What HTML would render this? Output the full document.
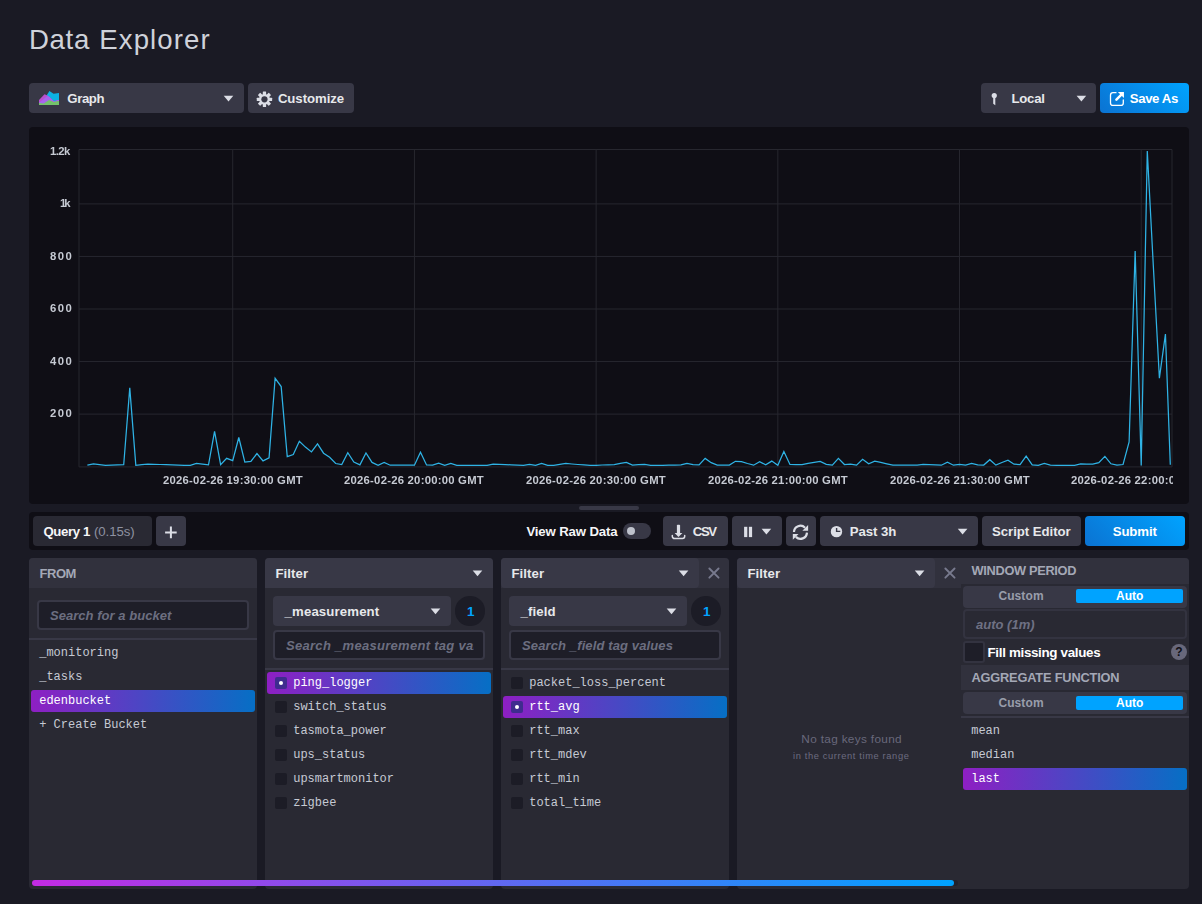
<!DOCTYPE html>
<html lang="en"><head><meta charset="utf-8"><title>Data Explorer</title>
<style>
*{box-sizing:border-box;margin:0;padding:0}
html,body{width:1202px;height:904px;overflow:hidden;background:#1a1a24;font-family:"Liberation Sans", sans-serif;color:#d4d7dd}
.b,.t,svg{position:absolute}
.t{white-space:nowrap;display:block}
.m{font:400 12px/20px "Liberation Mono", monospace}
.g{will-change:transform}
.btn{background:#383846;border-radius:4px;height:30px}
.pri{background:linear-gradient(45deg,#0b73d2,#00a3ff)}
.card{background:#292933;border-radius:4px;top:558px;height:331px}
.hd{background:#31313d;height:30px;top:558px;border-radius:4px 4px 0 0}
.inp{background:#1e1e28;border:2px solid #383846;border-radius:4px;height:30px}
.sep{height:2px;background:#383846}
.sel{height:22px;border-radius:3px;background:linear-gradient(90deg,#8e1fc3,#066fc5)}
.cb{width:12px;height:12px;border-radius:2px;background:#1c1c26}
.on{background:#3f2c8f}
.on:after{content:"";position:absolute;left:4px;top:4px;width:4px;height:4px;border-radius:50%;background:#fff}
.tog{height:22px;border-radius:4px;background:#383846}
.act{height:14px;border-radius:2px;background:#00a3ff}
</style></head><body>
<div class="b btn" style="left:29px;top:83px;width:215px"></div><div class="b btn" style="left:248px;top:83px;width:106px"></div><div class="b btn" style="left:981px;top:83px;width:115px"></div><div class="b btn pri" style="left:1100px;top:83px;width:89px"></div><div class="b " style="left:29px;top:127px;width:1160px;height:377px;background:#0f0e15;border-radius:4px"></div><div class="b " style="left:579px;top:506px;width:60px;height:4px;background:#383846;border-radius:2px"></div><div class="b " style="left:29px;top:512px;width:1160px;height:38px;background:#0f0e15;border-radius:4px"></div><div class="b btn" style="left:33px;top:516px;width:119px;background:#292933"></div><div class="b btn" style="left:156px;top:516px;width:30px"></div><div class="b " style="left:623px;top:523px;width:28px;height:16px;background:#383846;border-radius:8px"></div><div class="b " style="left:627px;top:527px;width:8px;height:8px;background:#bec2cc;border-radius:50%"></div><div class="b btn" style="left:663px;top:516px;width:65px"></div><div class="b btn" style="left:732px;top:516px;width:50px"></div><div class="b btn" style="left:786px;top:516px;width:30px"></div><div class="b btn" style="left:820px;top:516px;width:158px"></div><div class="b btn" style="left:982px;top:516px;width:99px"></div><div class="b btn pri" style="left:1085px;top:516px;width:100px"></div><div class="b card" style="left:29px;top:558px;width:228px"></div><div class="b card" style="left:265px;top:558px;width:228px"></div><div class="b card" style="left:501px;top:558px;width:228px"></div><div class="b card" style="left:737px;top:558px;width:228px"></div><div class="b hd" style="left:29px;top:558px;width:228px"></div><div class="b hd" style="left:265px;top:558px;width:228px;background:#383846"></div><div class="b hd" style="left:501px;top:558px;width:228px"></div><div class="b btn" style="left:501px;top:558px;width:198px"></div><div class="b hd" style="left:737px;top:558px;width:228px"></div><div class="b btn" style="left:737px;top:558px;width:198px"></div><div class="b inp" style="left:37px;top:600px;width:212px"></div><div class="b sep" style="left:29px;top:638px;width:228px"></div><div class="b sel" style="left:31px;top:690px;width:224px"></div><div class="b btn" style="left:273px;top:596px;width:178px"></div><div class="b " style="left:455.2px;top:596px;width:29.7px;height:29.7px;border-radius:50%;background:#1c1c26"></div><div class="b inp" style="left:273px;top:630px;width:212px"></div><div class="b sep" style="left:265px;top:668px;width:228px"></div><div class="b sel" style="left:267px;top:672px;width:224px"></div><div class="b cb on" style="left:275px;top:677px;width:12px"></div><div class="b cb" style="left:275px;top:701px;width:12px"></div><div class="b cb" style="left:275px;top:725px;width:12px"></div><div class="b cb" style="left:275px;top:749px;width:12px"></div><div class="b cb" style="left:275px;top:773px;width:12px"></div><div class="b cb" style="left:275px;top:797px;width:12px"></div><div class="b btn" style="left:509px;top:596px;width:178px"></div><div class="b " style="left:691.2px;top:596px;width:29.7px;height:29.7px;border-radius:50%;background:#1c1c26"></div><div class="b inp" style="left:509px;top:630px;width:212px"></div><div class="b sep" style="left:501px;top:668px;width:228px"></div><div class="b sel" style="left:503px;top:696px;width:224px"></div><div class="b cb" style="left:511px;top:677px;width:12px"></div><div class="b cb on" style="left:511px;top:701px;width:12px"></div><div class="b cb" style="left:511px;top:725px;width:12px"></div><div class="b cb" style="left:511px;top:749px;width:12px"></div><div class="b cb" style="left:511px;top:773px;width:12px"></div><div class="b cb" style="left:511px;top:797px;width:12px"></div><div class="b card" style="left:961px;top:558px;width:228px;border-radius:0 4px 4px 0"></div><div class="b hd" style="left:961px;top:558px;width:228px;height:25.5px;border-radius:0 4px 0 0"></div><div class="b tog" style="left:963px;top:585.5px;width:224px"></div><div class="b act" style="left:1076px;top:589px;width:107px"></div><div class="b inp" style="left:963px;top:609.25px;width:224px;height:29.5px;background:#292933;border-color:#333340"></div><div class="b " style="left:963px;top:641.25px;width:22px;height:21.5px;border-radius:3px;border:2px solid #333340;background:#1e1e28"></div><div class="b " style="left:1171px;top:644px;width:16px;height:16px;border-radius:50%;background:#68687b"></div><div class="b hd" style="left:961px;top:665px;width:228px;height:25px;border-radius:0"></div><div class="b tog" style="left:963px;top:692px;width:224px"></div><div class="b act" style="left:1076px;top:696px;width:107px"></div><div class="b sep" style="left:961px;top:716px;width:228px"></div><div class="b sel" style="left:963px;top:768px;width:224px"></div><div class="b " style="left:32px;top:880px;width:926px;height:6px;border-radius:3px;background:#22222c"></div><div class="b " style="left:32px;top:880px;width:922px;height:6px;border-radius:3px;background:linear-gradient(90deg,#c32be3,#00a3ff)"></div><svg width="1202" height="904" viewBox="0 0 1202 904" style="left:0;top:0">
<defs><clipPath id="cp"><rect x="79" y="140" width="1094" height="360"/></clipPath></defs>
<g stroke="#27272f" stroke-width="1" fill="none">
<path d="M79 149.500V466.900H1172V149.500Z"/><path d="M232.73 149.500V466.900"/><path d="M414.43 149.500V466.900"/><path d="M596.13 149.500V466.900"/><path d="M777.83 149.500V466.900"/><path d="M959.53 149.500V466.900"/><path d="M1141.23 149.500V466.900"/><path d="M79 203.90H1172"/><path d="M79 256.45H1172"/><path d="M79 309.00H1172"/><path d="M79 361.55H1172"/><path d="M79 414.10H1172"/>
</g>
<polyline clip-path="url(#cp)" points="87.37,465.1 93.43,464.0 99.48,464.6 105.54,465.3 111.60,465.1 117.65,464.9 123.71,464.7 129.77,387.9 135.82,465.4 141.88,464.7 147.94,464.2 153.99,464.3 160.05,464.5 166.11,464.7 172.16,464.9 178.22,465.1 184.28,465.3 190.33,465.4 196.39,463.3 202.45,464.1 208.50,464.8 214.56,431.4 220.62,464.6 226.67,458.3 232.73,460.7 238.79,437.5 244.84,462.1 250.90,461.4 256.95,453.5 263.01,460.9 269.07,457.9 275.12,378.3 281.18,386.6 287.24,456.6 293.29,454.6 299.35,441.3 305.41,447.1 311.46,451.9 317.52,443.8 323.58,453.2 329.63,457.3 335.69,463.5 341.75,464.6 347.80,452.7 353.86,462.0 359.92,464.9 365.97,453.0 372.03,462.4 378.09,465.2 384.14,462.4 390.20,465.2 396.26,465.2 402.31,465.2 408.37,465.2 414.43,465.2 420.48,452.2 426.54,464.9 432.60,465.2 438.65,463.1 444.71,465.3 450.77,463.5 456.82,465.3 462.88,465.3 468.94,465.3 474.99,465.3 481.05,465.3 487.11,465.3 493.16,464.1 499.22,464.3 505.28,464.6 511.33,464.9 517.39,465.2 523.45,465.4 529.50,464.4 535.56,465.4 541.62,463.5 547.67,465.3 553.73,465.3 559.78,464.3 565.84,463.4 571.90,464.0 577.95,464.5 584.01,464.9 590.07,465.4 596.12,465.3 602.18,465.0 608.24,464.8 614.29,464.6 620.35,463.3 626.41,462.4 632.46,465.1 638.52,464.7 644.58,464.5 650.63,465.4 656.69,465.4 662.75,465.3 668.80,465.2 674.86,465.1 680.92,464.9 686.97,463.3 693.03,464.6 699.09,464.9 705.14,458.4 711.20,462.7 717.26,465.0 723.31,465.0 729.37,465.0 735.43,461.3 741.48,461.6 747.54,463.5 753.60,465.2 759.65,461.6 765.71,464.9 771.77,461.1 777.82,465.2 783.88,451.4 789.94,464.4 795.99,464.7 802.05,464.7 808.11,463.3 814.16,462.4 820.22,461.4 826.28,464.4 832.33,465.2 838.39,458.4 844.45,464.5 850.50,464.2 856.56,465.1 862.61,459.3 868.67,463.8 874.73,461.2 880.78,462.4 886.84,463.8 892.90,465.2 898.95,465.2 905.01,465.2 911.07,465.2 917.12,465.2 923.18,464.5 929.24,464.6 935.29,464.9 941.35,465.2 947.41,462.2 953.46,465.2 959.52,464.4 965.58,465.2 971.63,463.3 977.69,464.9 983.75,465.0 989.80,459.7 995.86,465.1 1001.92,462.5 1007.97,460.2 1014.03,464.2 1020.09,464.6 1026.14,456.2 1032.20,464.9 1038.26,465.3 1044.31,463.5 1050.37,465.1 1056.43,465.3 1062.48,465.3 1068.54,465.3 1074.60,465.3 1080.65,464.0 1086.71,464.1 1092.77,464.1 1098.82,462.6 1104.88,456.4 1110.94,463.8 1116.99,465.1 1123.05,464.5 1129.11,441.8 1135.16,251.0 1141.22,465.5 1147.28,151.0 1153.33,266.0 1159.39,378.1 1165.44,334.1 1170.30,464.8" fill="none" stroke="#2fb3e5" stroke-width="1.250" stroke-linejoin="miter"/>
<g fill="#dcdee6"><path d="M223.7 95.8h9.600l-4.800 5.700z"/><path d="M1076.6 95.8h9.600l-4.800 5.700z"/><path d="M761.6 528.7h9.600l-4.800 5.700z"/><path d="M957.8 528.7h9.600l-4.800 5.700z"/><path d="M472.7 570.5h9.600l-4.800 5.700z"/><path d="M678.8 570.5h9.600l-4.800 5.700z"/><path d="M914.8 570.5h9.600l-4.800 5.700z"/><path d="M430.7 608.6h9.600l-4.800 5.700z"/><path d="M666.7 608.6h9.600l-4.800 5.700z"/></g>
<!-- graph icon -->
<g transform="translate(39 91)">
<polygon points="7.900,4.100 10.400,0 14.600,2.800 20,2 20,14 7.900,14" fill="#0cb2e2"/>
<polygon points="0,8.900 5.500,3.300 8,4.300 10,5.700 15,10.300 18.500,9.200 20,8.900 20,14 0,14" fill="#b94fce"/>
<polygon points="0,11.500 3,9.500 7.900,5.300 10,5.600 15,10.400 18.500,9.300 20,9 20,14 0,14" fill="#a864ee"/>
<polygon points="0,12.100 4.700,12.500 10,8.900 15,11 18.500,10.100 20,10 20,14 0,14" fill="#74c36b"/>
</g>
<!-- gear -->
<g transform="translate(264.450 99.300)" fill="#dcdee6">
<circle r="5.400"/>
<rect x="-1.650" y="-7.700" width="3.300" height="15.400" rx=".5"/>
<rect x="-1.650" y="-7.700" width="3.300" height="15.400" rx=".5" transform="rotate(45)"/>
<rect x="-1.650" y="-7.700" width="3.300" height="15.400" rx=".5" transform="rotate(90)"/>
<rect x="-1.650" y="-7.700" width="3.300" height="15.400" rx=".5" transform="rotate(135)"/>
<circle r="3.100" fill="#383846"/>
</g>
<!-- pin -->
<g fill="#dcdee6"><circle cx="994.250" cy="95.500" r="2.600"/><path d="M993.200 96H995.300V105.300L993.200 103.800Z"/></g>
<!-- export -->
<path d="M1116 92.650H1113A2.500 2.500 0 0 0 1110.500 95.150V102.950A2.500 2.500 0 0 0 1113 105.450H1120.800A2.500 2.500 0 0 0 1123.300 102.950V100" fill="none" stroke="#fff" stroke-width="1.300" stroke-linecap="round"/>
<path d="M1117.900 92.100H1123.960V98.100Z" fill="#fff"/>
<path d="M1116.400 99.600L1121.900 94.100" stroke="#fff" stroke-width="2.500" stroke-linecap="round"/>
<!-- plus -->
<path d="M170.900 526.600V538.200M165.100 532.400H176.700" stroke="#dcdee6" stroke-width="2"/>
<!-- download -->
<g fill="#dcdee6"><rect x="676.900" y="524.700" width="3.200" height="9" rx=".8"/><path d="M674.600 533.100H682.400L678.500 537.100Z"/></g>
<path d="M672.300 535.600V536.300A2.200 2.200 0 0 0 674.500 538.500H682.500A2.200 2.200 0 0 0 684.700 536.300V535.600" fill="none" stroke="#dcdee6" stroke-width="1.500" stroke-linecap="round"/>
<!-- pause -->
<g fill="#dcdee6"><rect x="744.100" y="526.800" width="3.200" height="10.300"/><rect x="748.900" y="526.800" width="3.200" height="10.300"/></g>
<!-- refresh -->
<g transform="translate(800.450 532.300)" fill="none" stroke="#dcdee6" stroke-width="2.200"><path d="M-6.500 -0.300A6.500 6.500 0 0 1 4.600 -4.600"/><path d="M6.500 0.300A6.500 6.500 0 0 1 -4.600 4.600"/><path d="M7.650 -7.400V-1.600H1.950Z" fill="#dcdee6" stroke="none"/><path d="M-7.650 7.400V1.600H-1.950Z" fill="#dcdee6" stroke="none"/></g>
<!-- clock -->
<g><circle cx="836.500" cy="531.650" r="5.700" fill="#dcdee6"/><path d="M836.600 527.900V531.400H840.300" fill="none" stroke="#383846" stroke-width="1.400"/></g>
<!-- X close -->
<g stroke="#787a8e" stroke-width="1.900" stroke-linecap="round"><path d="M709.35 568.5L718.5500000000001 577.7M718.5500000000001 568.5L709.35 577.7"/><path d="M945.35 568.5L954.5500000000001 577.7M954.5500000000001 568.5L945.35 577.7"/></g>
<!-- question mark -->
<text x="1179" y="656" text-anchor="middle" style="font:700 12px 'Liberation Sans',sans-serif" fill="#0f0e15">?</text>
</svg>
<span class="t" style="left:29.00px;top:29.50px;font:normal 400 27.6px/20px 'Liberation Sans', sans-serif;letter-spacing:0.653px;color:#cfd2da">Data</span><span class="t" style="left:99.20px;top:29.50px;font:normal 400 27.6px/20px 'Liberation Sans', sans-serif;letter-spacing:1.120px;color:#cfd2da">Explorer</span><span class="t" style="left:67.30px;top:88.90px;font:normal 700 13.2px/20px 'Liberation Sans', sans-serif;letter-spacing:-0.395px;color:#e7e8eb">Graph</span><span class="t" style="left:277.90px;top:89.20px;font:normal 700 13.2px/20px 'Liberation Sans', sans-serif;letter-spacing:-0.055px;color:#e7e8eb">Customize</span><span class="t" style="left:1011.50px;top:89.00px;font:normal 700 13.2px/20px 'Liberation Sans', sans-serif;letter-spacing:-0.245px;color:#e7e8eb">Local</span><span class="t" style="left:1129.80px;top:89.00px;font:normal 700 13.2px/20px 'Liberation Sans', sans-serif;letter-spacing:-0.381px;color:#ffffff">Save As</span><span class="t" style="left:43.40px;top:522.10px;font:normal 700 13.2px/20px 'Liberation Sans', sans-serif;letter-spacing:-0.363px;color:#f6f6f8">Query 1</span><span class="t" style="left:94.00px;top:522.10px;font:normal 400 13.2px/20px 'Liberation Sans', sans-serif;letter-spacing:-0.075px;color:#8e91a1">(0.15s)</span><span class="t" style="left:526.40px;top:522.10px;font:normal 700 13.2px/20px 'Liberation Sans', sans-serif;letter-spacing:-0.134px;color:#f6f6f8">View Raw Data</span><span class="t" style="left:692.80px;top:522.10px;font:normal 700 13.2px/20px 'Liberation Sans', sans-serif;letter-spacing:-1.410px;color:#e7e8eb">CSV</span><span class="t" style="left:849.70px;top:522.20px;font:normal 700 13.2px/20px 'Liberation Sans', sans-serif;letter-spacing:-0.042px;color:#e7e8eb">Past 3h</span><span class="t" style="left:992.00px;top:522.20px;font:normal 700 13.2px/20px 'Liberation Sans', sans-serif;letter-spacing:-0.042px;color:#e7e8eb">Script Editor</span><span class="t" style="left:1112.70px;top:522.20px;font:normal 700 13.2px/20px 'Liberation Sans', sans-serif;letter-spacing:-0.099px;color:#ffffff">Submit</span><span class="t" style="left:39.60px;top:564.30px;font:normal 700 13.0px/20px 'Liberation Sans', sans-serif;letter-spacing:-0.480px;color:#a4a8b6">FROM</span><span class="t" style="left:275.40px;top:564.10px;font:normal 700 13.2px/20px 'Liberation Sans', sans-serif;letter-spacing:0.078px;color:#e7e8eb">Filter</span><span class="t" style="left:511.40px;top:564.10px;font:normal 700 13.2px/20px 'Liberation Sans', sans-serif;letter-spacing:0.078px;color:#e7e8eb">Filter</span><span class="t" style="left:747.40px;top:564.10px;font:normal 700 13.2px/20px 'Liberation Sans', sans-serif;letter-spacing:0.078px;color:#e7e8eb">Filter</span><span class="t" style="left:284.60px;top:602.00px;font:normal 700 13.2px/20px 'Liberation Sans', sans-serif;letter-spacing:0.136px;color:#e7e8eb">_measurement</span><span class="t" style="left:520.60px;top:602.00px;font:normal 700 13.2px/20px 'Liberation Sans', sans-serif;letter-spacing:0.082px;color:#e7e8eb">_field</span><span class="t" style="left:466.90px;top:601.90px;font:normal 700 13.5px/20px 'Liberation Sans', sans-serif;letter-spacing:0.000px;color:#00a3ff">1</span><span class="t" style="left:702.90px;top:601.90px;font:normal 700 13.5px/20px 'Liberation Sans', sans-serif;letter-spacing:0.000px;color:#00a3ff">1</span><span class="t" style="left:50.00px;top:605.80px;font:italic 700 13.0px/20px 'Liberation Sans', sans-serif;letter-spacing:0.037px;color:#6c6e80">Search for a bucket</span><span class="t" style="left:286.00px;top:635.80px;font:italic 700 13.0px/20px 'Liberation Sans', sans-serif;letter-spacing:0.292px;color:#6c6e80;width:187.80px;overflow:hidden">Search _measurement tag values</span><span class="t" style="left:522.00px;top:635.80px;font:italic 700 13.0px/20px 'Liberation Sans', sans-serif;letter-spacing:0.122px;color:#6c6e80">Search _field tag values</span><span class="t" style="left:801.30px;top:728.80px;font:normal 400 11.8px/20px 'Liberation Sans', sans-serif;letter-spacing:0.329px;color:#68687b">No tag keys found</span><span class="t" style="left:793.00px;top:745.80px;font:normal 400 9.3px/20px 'Liberation Sans', sans-serif;letter-spacing:0.629px;color:#6c6c80">in the current time range</span><span class="t" style="left:971.60px;top:561.10px;font:normal 700 12.8px/20px 'Liberation Sans', sans-serif;letter-spacing:-0.327px;color:#a4a8b6">WINDOW PERIOD</span><span class="t" style="left:971.40px;top:668.00px;font:normal 700 12.8px/20px 'Liberation Sans', sans-serif;letter-spacing:-0.179px;color:#a4a8b6">AGGREGATE FUNCTION</span><span class="t" style="left:998.40px;top:586.10px;font:normal 700 12.0px/20px 'Liberation Sans', sans-serif;letter-spacing:0.101px;color:#999dab">Custom</span><span class="t" style="left:998.40px;top:693.10px;font:normal 700 12.0px/20px 'Liberation Sans', sans-serif;letter-spacing:0.101px;color:#999dab">Custom</span><span class="t" style="left:1116.10px;top:586.10px;font:normal 700 12.0px/20px 'Liberation Sans', sans-serif;letter-spacing:0.003px;color:#ffffff">Auto</span><span class="t" style="left:1116.10px;top:693.10px;font:normal 700 12.0px/20px 'Liberation Sans', sans-serif;letter-spacing:0.003px;color:#ffffff">Auto</span><span class="t" style="left:976.00px;top:614.90px;font:italic 700 13.0px/20px 'Liberation Sans', sans-serif;letter-spacing:0.004px;color:#6f7184">auto (1m)</span><span class="t" style="left:987.50px;top:642.80px;font:normal 700 13.4px/20px 'Liberation Sans', sans-serif;letter-spacing:-0.329px;color:#ffffff">Fill missing values</span><span class="t g" style="left:50.10px;top:141.20px;font:normal 700 11.3px/20px 'Liberation Sans', sans-serif;letter-spacing:-0.568px;color:#c6cad3">1.2k</span><span class="t g" style="left:59.80px;top:193.10px;font:normal 700 11.3px/20px 'Liberation Sans', sans-serif;letter-spacing:-1.983px;color:#c6cad3">1k</span><span class="t g" style="left:49.70px;top:245.90px;font:normal 700 11.3px/20px 'Liberation Sans', sans-serif;letter-spacing:1.417px;color:#c6cad3">800</span><span class="t g" style="left:49.70px;top:298.30px;font:normal 700 11.3px/20px 'Liberation Sans', sans-serif;letter-spacing:1.417px;color:#c6cad3">600</span><span class="t g" style="left:49.70px;top:350.90px;font:normal 700 11.3px/20px 'Liberation Sans', sans-serif;letter-spacing:1.417px;color:#c6cad3">400</span><span class="t g" style="left:49.70px;top:403.10px;font:normal 700 11.3px/20px 'Liberation Sans', sans-serif;letter-spacing:1.417px;color:#c6cad3">200</span><span class="t g" style="left:162.73px;top:470.00px;font:normal 700 11.3px/20px 'Liberation Sans', sans-serif;letter-spacing:0.242px;color:#c6cad3">2026-02-26 19:30:00 GMT</span><span class="t g" style="left:344.43px;top:470.00px;font:normal 700 11.3px/20px 'Liberation Sans', sans-serif;letter-spacing:0.242px;color:#c6cad3">2026-02-26 20:00:00 GMT</span><span class="t g" style="left:526.13px;top:470.00px;font:normal 700 11.3px/20px 'Liberation Sans', sans-serif;letter-spacing:0.242px;color:#c6cad3">2026-02-26 20:30:00 GMT</span><span class="t g" style="left:707.83px;top:470.00px;font:normal 700 11.3px/20px 'Liberation Sans', sans-serif;letter-spacing:0.242px;color:#c6cad3">2026-02-26 21:00:00 GMT</span><span class="t g" style="left:889.53px;top:470.00px;font:normal 700 11.3px/20px 'Liberation Sans', sans-serif;letter-spacing:0.242px;color:#c6cad3">2026-02-26 21:30:00 GMT</span><span class="t g" style="left:1071.23px;top:470.00px;font:normal 700 11.3px/20px 'Liberation Sans', sans-serif;letter-spacing:0.242px;color:#c6cad3;width:101.77px;overflow:hidden">2026-02-26 22:00:00 GMT</span><span class="t m" style="left:39.2px;top:643.00px;color:#c6cad3">_monitoring</span><span class="t m" style="left:39.2px;top:667.00px;color:#c6cad3">_tasks</span><span class="t m" style="left:39.2px;top:691.00px;color:#ffffff">edenbucket</span><span class="t m" style="left:39.2px;top:715.00px;color:#c6cad3">+ Create Bucket</span><span class="t m" style="left:293.2px;top:673.00px;color:#ffffff">ping_logger</span><span class="t m" style="left:293.2px;top:697.00px;color:#c6cad3">switch_status</span><span class="t m" style="left:293.2px;top:721.00px;color:#c6cad3">tasmota_power</span><span class="t m" style="left:293.2px;top:745.00px;color:#c6cad3">ups_status</span><span class="t m" style="left:293.2px;top:769.00px;color:#c6cad3">upsmartmonitor</span><span class="t m" style="left:293.2px;top:793.00px;color:#c6cad3">zigbee</span><span class="t m" style="left:529.2px;top:673.00px;color:#c6cad3">packet_loss_percent</span><span class="t m" style="left:529.2px;top:697.00px;color:#ffffff">rtt_avg</span><span class="t m" style="left:529.2px;top:721.00px;color:#c6cad3">rtt_max</span><span class="t m" style="left:529.2px;top:745.00px;color:#c6cad3">rtt_mdev</span><span class="t m" style="left:529.2px;top:769.00px;color:#c6cad3">rtt_min</span><span class="t m" style="left:529.2px;top:793.00px;color:#c6cad3">total_time</span><span class="t m" style="left:971.2px;top:721.00px;color:#c6cad3">mean</span><span class="t m" style="left:971.2px;top:745.00px;color:#c6cad3">median</span><span class="t m" style="left:971.2px;top:769.00px;color:#ffffff">last</span></body></html>
